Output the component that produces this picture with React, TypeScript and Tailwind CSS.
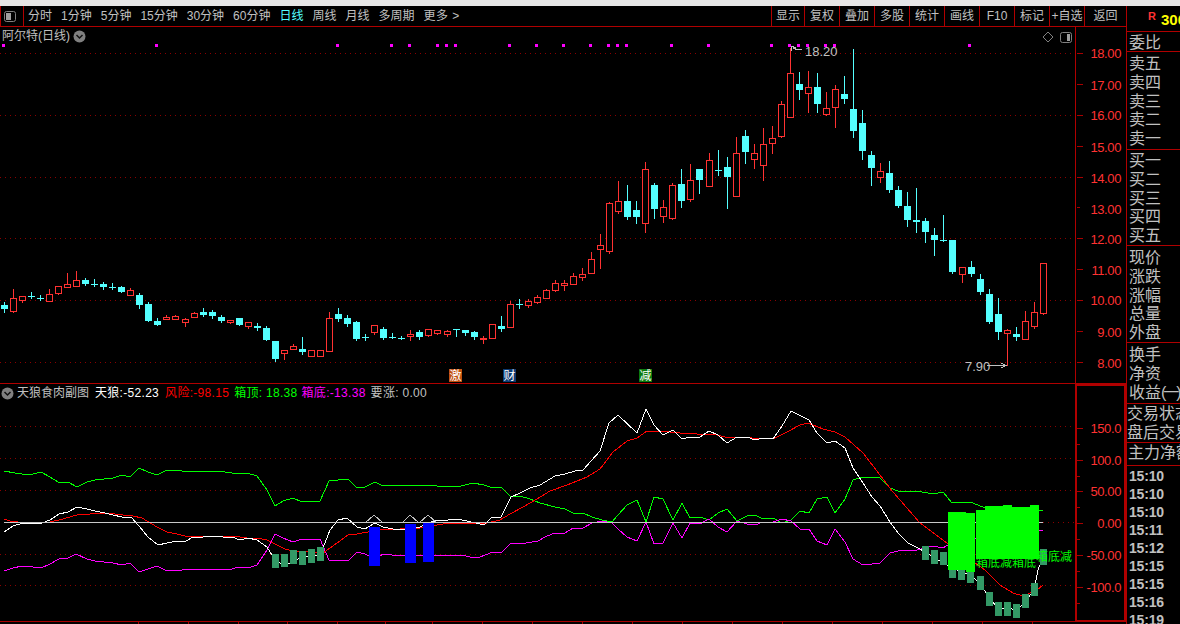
const RED = '#ff3232';
const CYAN = '#54ffff';
const GRID = '#8a0000';

const periods = ['分时', '1分钟', '5分钟', '15分钟', '30分钟', '60分钟', '日线', '周线', '月线', '多周期'];
const actions = [
	{ name: '显示', w: 'w-[33px]' },
	{ name: '复权', w: 'w-[35px]' },
	{ name: '叠加', w: 'w-[35px]' },
	{ name: '多股', w: 'w-[35px]' },
	{ name: '统计', w: 'w-[35px]' },
	{ name: '画线', w: 'w-[35px]' },
	{ name: 'F10', w: 'w-[35px]' },
	{ name: '标记', w: 'w-[35px]' },
	{ name: '+自选', w: 'w-[35px]' },
	{ name: '返回', w: 'w-[42px]' },
];

// [red?, high, body top, body bottom, low], one per trading day
const candles: number[][] = [
	[0, 302, 305, 309, 312], [1, 289, 298, 311, 312], [1, 296, 296, 300, 302], [0, 292, 296, 297, 298],
	[0, 295, 298, 299, 300], [1, 289, 294, 301, 301], [1, 286, 286, 293, 294], [1, 273, 284, 287, 287],
	[1, 271, 280, 286, 286], [0, 278, 280, 284, 285], [0, 279, 284, 285, 286], [0, 282, 284, 287, 289],
	[0, 283, 287, 288, 289], [0, 286, 287, 292, 292], [1, 288, 290, 295, 295], [0, 293, 295, 305, 308],
	[0, 302, 304, 321, 321], [0, 318, 321, 325, 325], [1, 315, 317, 319, 319], [1, 315, 316, 319, 319],
	[1, 318, 319, 322, 326], [1, 312, 313, 317, 317], [0, 308, 312, 315, 316], [0, 310, 312, 316, 318],
	[0, 315, 317, 321, 322], [1, 320, 320, 322, 323], [0, 318, 318, 325, 325], [1, 322, 322, 326, 328],
	[0, 323, 326, 328, 330], [0, 326, 328, 340, 340], [0, 341, 341, 359, 361], [1, 350, 350, 353, 359],
	[1, 344, 346, 349, 349], [0, 337, 349, 352, 354], [1, 350, 350, 356, 356], [1, 350, 350, 356, 356],
	[1, 312, 318, 351, 351], [0, 308, 314, 319, 321], [0, 315, 318, 324, 326], [0, 321, 322, 339, 340],
	[0, 334, 337, 338, 340], [1, 325, 325, 332, 334], [0, 327, 329, 338, 339], [0, 333, 337, 338, 338],
	[0, 336, 338, 339, 339], [1, 330, 334, 336, 340], [0, 330, 332, 337, 339], [1, 329, 329, 335, 336],
	[1, 330, 330, 333, 334], [1, 330, 331, 334, 336], [0, 329, 329, 330, 336], [0, 330, 330, 333, 335],
	[0, 331, 332, 337, 339], [1, 336, 338, 339, 343], [1, 324, 324, 338, 338], [0, 316, 326, 329, 331],
	[1, 301, 304, 327, 327], [0, 299, 304, 305, 308], [1, 299, 301, 305, 307], [1, 295, 297, 302, 303],
	[1, 289, 290, 298, 298], [1, 280, 283, 290, 291], [1, 280, 283, 285, 290], [1, 273, 276, 284, 284],
	[1, 268, 274, 277, 280], [1, 252, 259, 273, 273], [1, 234, 245, 249, 268], [1, 202, 203, 251, 253],
	[1, 181, 201, 211, 213], [0, 185, 201, 217, 219], [0, 201, 210, 217, 223], [1, 162, 169, 223, 232],
	[0, 183, 185, 209, 218], [1, 200, 207, 216, 222], [1, 183, 185, 218, 219], [0, 169, 184, 201, 207],
	[1, 164, 180, 199, 201], [0, 169, 169, 180, 193], [1, 153, 160, 186, 186], [0, 150, 170, 171, 175],
	[0, 157, 167, 177, 208], [1, 137, 153, 196, 196], [0, 130, 136, 152, 163], [1, 144, 153, 159, 168],
	[1, 128, 144, 165, 180], [1, 126, 138, 143, 153], [1, 101, 104, 136, 137], [1, 48, 73, 117, 117],
	[0, 72, 84, 90, 99], [1, 71, 87, 93, 112], [0, 73, 87, 104, 112], [1, 92, 108, 114, 115],
	[1, 85, 89, 107, 127], [0, 76, 94, 99, 103], [0, 49, 109, 131, 137], [0, 110, 123, 151, 159],
	[0, 151, 155, 168, 185], [1, 163, 171, 177, 182], [0, 161, 173, 190, 192], [0, 186, 190, 206, 207],
	[0, 192, 206, 220, 226], [0, 188, 220, 222, 232], [0, 218, 221, 232, 242], [0, 228, 235, 240, 255],
	[0, 215, 240, 241, 241], [0, 240, 240, 272, 273], [1, 267, 267, 274, 282], [0, 261, 267, 274, 276],
	[0, 274, 279, 292, 294], [0, 289, 294, 322, 323], [0, 298, 314, 332, 339], [1, 329, 330, 333, 365],
	[0, 327, 334, 337, 340], [1, 311, 321, 339, 339], [1, 302, 312, 326, 328], [1, 263, 263, 313, 314],
];

const signalDots = [3, 156, 337, 391, 409, 437, 446, 455, 509, 536, 563, 590, 608, 617, 626, 671, 708, 771, 789, 798, 807, 825, 834, 969];

const whiteLine = '4,532 13,526 23,523 33,523 42,523 50,520 59,514 68,512 77,507 87,509 95,511 105,513 113,515 122,517 131,517 139,526 148,537 158,545 167,543 177,541 186,541 193,537 203,537 213,536 223,537 232,537 240,540 248,538 257,540 267,547 275,560 283,565 293,562 302,557 320,555 325,543 330,530 338,520 347,518 357,527 365,529 375,523 383,527 393,529 402,530 410,527 420,527 428,523 438,520 448,520 457,519 467,521 480,524 484,525 492,517 501,517 511,497 520,493 530,488 540,485 555,476 565,474 575,471 583,470 600,451 609,423 618,415 637,433 646,409 654,425 663,435 673,430 682,439 690,437 700,437 709,431 718,435 727,443 737,437 747,437 755,440 763,438 773,439 782,426 791,411 809,420 817,433 827,443 835,441 845,448 853,468 863,483 872,497 880,506 890,522 898,533 908,543 920,549 933,557 947,565 957,570 970,575 980,583 989,598 998,608 1007,608 1017,610 1025,602 1034,590 1038,570 1043,557';
const redLine = '4,519 10,521 18,522 50,522 63,519 77,515 90,514 107,513 123,515 133,516 142,518 157,527 167,532 177,534 185,536 207,536 233,536 247,538 257,538 267,540 277,545 285,549 293,551 323,553 337,543 348,535 357,534 368,532 380,530 400,529 420,528 437,525 450,523 462,523 487,523 500,520 510,514 523,507 537,499 550,491 567,485 587,477 600,469 613,452 627,441 637,438 647,431 660,431 680,433 697,434 713,434 725,437 747,437 752,438 773,439 787,432 800,425 808,423 823,429 835,432 845,437 863,453 880,475 893,492 907,508 920,523 947,543 985,570 1000,585 1013,593 1023,596 1037,590 1043,585';
const greenLine = '4,471 15,473 22,474 33,474 41,472 50,477 58,482 68,482 77,487 87,482 95,480 113,478 122,475 130,477 139,468 148,472 157,475 167,470 182,471 192,472 200,471 217,471 232,473 238,474 247,473 257,476 267,490 275,506 283,501 293,498 302,502 320,501 329,481 348,479 357,488 365,487 375,482 383,486 392,485 400,486 407,485 433,485 437,486 452,486 457,487 473,483 484,485 493,488 501,487 511,497 520,496 530,499 540,503 555,507 565,509 573,513 583,513 592,517 602,520 612,522 618,515 627,505 637,500 646,522 654,497 663,499 673,520 682,503 690,518 700,517 709,520 718,513 727,509 737,521 747,516 755,515 763,519 773,518 782,523 791,520 800,511 809,513 817,499 827,497 835,513 845,499 853,480 863,477 872,477 880,478 890,488 898,491 908,492 917,491 933,494 943,492 952,503 970,502 983,507 1039,510 1043,510';
const magentaLine = '4,571 13,568 22,566 33,567 41,568 50,564 59,559 68,558 76,554 87,559 95,561 113,563 122,565 130,563 139,572 148,569 157,566 167,571 182,570 207,569 212,570 220,569 232,569 238,567 248,568 257,565 267,550 275,534 283,538 293,542 302,539 320,539 329,560 348,561 357,552 365,554 375,559 383,554 392,555 462,555 470,557 480,557 493,552 501,553 511,543 520,544 538,541 547,536 555,533 565,533 573,528 583,528 592,523 602,521 612,523 618,529 627,537 637,541 646,522 654,544 663,543 673,523 682,538 690,523 700,524 709,519 718,527 727,532 737,521 747,524 755,525 763,522 773,522 782,519 791,521 800,529 809,529 817,541 827,545 835,529 845,542 853,559 863,565 872,564 880,563 890,553 898,551 908,550 917,550 933,546 943,548 953,542 1039,530 1043,531';
const grayPeaks = ['365,523 374,515 383,523', '402,523 410,515 419,523 428,515 437,523'];

// [left, top, bottom]
const tealBars = [
	[272, 554, 568], [281, 554, 567], [290, 550, 564], [299, 551, 565], [308, 549, 563], [317, 547, 561],
	[922, 546, 560], [931, 550, 564], [940, 552, 565], [949, 556, 578], [958, 558, 580], [967, 560, 583],
	[977, 576, 590], [986, 592, 606], [995, 602, 616], [1004, 602, 616], [1013, 604, 618], [1022, 594, 608],
	[1031, 583, 596], [1040, 549, 565],
];
const blueBars = [
	[369, 527, 566], [405, 524, 563], [423, 523, 562],
];
// [left, width, top, bottom]
const limeBlocks = [
	[948, 18, 512, 570], [966, 9, 513, 572], [976, 9, 510, 559], [985, 18, 506, 559],
	[1003, 9, 505, 559], [1012, 18, 507, 559], [1030, 9, 505, 559],
];
// label of the box, printed low on the green blocks
const boxLabels = [
	{ x: 976, y: 567, text: '箱底减' },
	{ x: 1012, y: 567, text: '箱底' },
	{ x: 1036, y: 561, text: '箱底减' },
];

const mainAxis = [
	{ label: '18.00', y: 53 }, { label: '17.00', y: 85 }, { label: '16.00', y: 115 }, { label: '15.00', y: 147 },
	{ label: '14.00', y: 178 }, { label: '13.00', y: 209 }, { label: '12.00', y: 239 }, { label: '11.00', y: 270 },
	{ label: '10.00', y: 300 }, { label: '9.00', y: 332 }, { label: '8.00', y: 363 },
];
const subAxis = [
	{ label: '150.0', y: 427 }, { label: '100.0', y: 459 }, { label: '50.00', y: 490 },
	{ label: '0.00', y: 522 }, { label: '-50.00', y: 554 }, { label: '-100.0', y: 586 },
];

const panelGroups = [
	{ rows: ['卖五', '卖四', '卖三', '卖二', '卖一'], h: 'h-[98px] pt-[3px]' },
	{ rows: ['买一', '买二', '买三', '买四', '买五'], h: 'h-[96px] pt-[2px]' },
	{ rows: ['现价', '涨跌', '涨幅', '总量', '外盘'], h: 'h-[97px] pt-[3px]' },
];
const times = ['15:10', '15:10', '15:10', '15:11', '15:12', '15:15', '15:15', '15:16', '15:19'];

const wickX = (n: number) => Math.floor(4.3 + 9.035 * n);

const Chevron = () => (
	<svg
		width="13"
		height="13"
		viewBox="0 0 13 13">
		<circle
			cx="6.5"
			cy="6.5"
			r="6"
			fill="#808080"
		/>
		<path
			d="M3.5 5 L6.5 8 L9.5 5"
			fill="none"
			stroke="#111"
			strokeWidth="1.5"
		/>
	</svg>
);

const PanelIcon = ({ right }: { right?: boolean }) => (
	<svg
		width="12"
		height="11"
		viewBox="0 0 12 11">
		<rect
			x="0.5"
			y="0.5"
			width="11"
			height="10"
			rx="2"
			fill="none"
			stroke="#808080"
		/>
		<rect
			x={right ? 7 : 2}
			y="2"
			width={right ? 3 : 5}
			height="7"
			fill="#a0a0a0"
		/>
	</svg>
);

const Axis = ({ items, ticks, top, height }: { items: { label: string; y: number }[]; ticks: number[]; top: number; height: number }) => (
	<svg
		className="block"
		width="49"
		height={height}
		viewBox={`1077 ${top} 49 ${height}`}
		shapeRendering="crispEdges">
		{ticks.map((y) => (
			<line
				key={y}
				x1="1077"
				x2={items.some((i) => Math.abs(i.y - y) < 2) ? 1083 : 1080}
				y1={y + 0.5}
				y2={y + 0.5}
				stroke="#a80000"
			/>
		))}
		{items.map((i) => (
			<text
				key={i.label}
				x="1121"
				y={i.y + 5}
				textAnchor="end"
				fontSize="13"
				fill={RED}
				letterSpacing="-0.4">
				{i.label}
			</text>
		))}
	</svg>
);

const GridLine = ({ y, x1 = 0, x2 = 1075 }: { y: number; x1?: number; x2?: number }) => (
	<line
		x1={x1}
		x2={x2}
		y1={y + 0.5}
		y2={y + 0.5}
		stroke={GRID}
		strokeDasharray="1 4"
	/>
);

const Chip = ({ x, bg, text }: { x: number; bg: string; text: string }) => (
	<g>
		<rect
			x={x}
			y="369"
			width="13"
			height="13"
			fill={bg}
		/>
		<text
			x={x + 0.5}
			y="380"
			fontSize="12"
			fill="#fff">
			{text}
		</text>
	</g>
);

const MainChart = () => (
	<svg
		className="block"
		width="1075"
		height="356"
		viewBox="0 27 1075 356">
		<g shapeRendering="crispEdges">
			{[53, 115, 177, 238, 300, 362].map((y) => (
				<GridLine
					key={y}
					y={y}
				/>
			))}
			{signalDots.map((x) => (
				<rect
					key={x}
					x={x - 1}
					y="44"
					width="3"
					height="3"
					fill="#ff00ff"
				/>
			))}
			{candles.map(([up, high, top, bottom, low], n) => {
				const x = wickX(n);
				const color = up ? RED : CYAN;
				return (
					<g key={n}>
						<rect
							x={x}
							y={high}
							width="1"
							height={low - high + 1}
							fill={color}
						/>
						{up ? (
							<rect
								x={x - 3 + 0.5}
								y={top + 0.5}
								width="6"
								height={Math.max(bottom - top, 1)}
								fill="#000"
								stroke={color}
							/>
						) : (
							<rect
								x={x - 3}
								y={top}
								width="7"
								height={Math.max(bottom - top, 1)}
								fill={color}
							/>
						)}
					</g>
				);
			})}
			<path
				d="M791 46 L791 51 M791 46 L796 48 M793 48 L798 50 L802 49 M987 365.5 L1005 365.5 M1001 363 L1006 365.5 L1001 368"
				fill="none"
				stroke="#c0c0c0"
			/>
		</g>
		<text
			x="805"
			y="56"
			fontSize="13"
			fill="#c0c0c0">
			18.20
		</text>
		<text
			x="965"
			y="371"
			fontSize="13"
			fill="#c0c0c0">
			7.90
		</text>
		<Chip
			x={449}
			bg="#c0500f"
			text="激"
		/>
		<Chip
			x={503}
			bg="#0c3a72"
			text="财"
		/>
		<Chip
			x={639}
			bg="#0c7a0c"
			text="减"
		/>
		<path
			d="M1048 32 L1053 37 L1048 42 L1043 37 Z"
			fill="none"
			stroke="#808080"
		/>
	</svg>
);

const SubChart = () => (
	<svg
		className="block"
		width="1075"
		height="240"
		viewBox="0 384 1075 240">
		<g
			fill="none"
			shapeRendering="crispEdges">
			{[426, 458, 490, 554, 585].map((y) => (
				<GridLine
					key={y}
					y={y}
				/>
			))}
			<GridLine
				y={522}
				x1={1043}
			/>
			<line
				x1="0"
				x2="1075"
				y1="621.5"
				y2="621.5"
				stroke="#a80000"
			/>
			{[138, 188, 238, 287, 337, 385, 432, 482, 532, 582, 632, 682, 732, 782, 832, 882, 932, 982, 1032].map((x) => (
				<line
					key={x}
					x1={x + 0.5}
					x2={x + 0.5}
					y1="622"
					y2="624"
					stroke="#a80000"
				/>
			))}
			<polyline
				points={greenLine}
				stroke="#00ff00"
			/>
			<polyline
				points={magentaLine}
				stroke="#ff00ff"
			/>
			<polyline
				points={redLine}
				stroke="#ff0000"
			/>
			<polyline
				points={whiteLine}
				stroke="#ffffff"
			/>
			{grayPeaks.map((p) => (
				<polyline
					key={p}
					points={p}
					stroke="#c0c0c0"
				/>
			))}
			<line
				x1="4"
				x2="1043"
				y1="522.5"
				y2="522.5"
				stroke="#c8c8c8"
			/>
			{tealBars.map(([x, top, bottom]) => (
				<rect
					key={x}
					x={x}
					y={top}
					width="7"
					height={bottom - top}
					fill="#339966"
				/>
			))}
			{blueBars.map(([x, top, bottom]) => (
				<rect
					key={x}
					x={x}
					y={top}
					width="11"
					height={bottom - top}
					fill="#0000ff"
				/>
			))}
			{limeBlocks.map(([x, w, top, bottom]) => (
				<rect
					key={x}
					x={x}
					y={top}
					width={w}
					height={bottom - top}
					fill="#00ff00"
				/>
			))}
		</g>
		{boxLabels.map((l) => (
			<text
				key={l.x}
				x={l.x}
				y={l.y}
				fontSize="12"
				fill="#00ff00">
				{l.text}
			</text>
		))}
	</svg>
);

export default function App() {
	return (
		<div className="w-[1180px] h-[624px] overflow-hidden bg-black text-[#c0c0c0] text-[12px] font-['Liberation_Sans','Noto_Sans_CJK_SC',sans-serif]">
			<div className="h-[6px] bg-[#e6e6e6]" />
			<div className="flex h-[618px]">
				<div className="w-[1126px] flex flex-col">
					{/* toolbar */}
					<div className="h-[21px] flex items-stretch border-b border-[#b00000] border-l whitespace-nowrap">
						<div className="w-[23px] flex items-center justify-center border-r border-[#b00000] pr-1">
							<PanelIcon />
						</div>
						<div className="flex items-center gap-[9px] pl-[4px]">
							{periods.map((p) => (
								<span
									key={p}
									className={p === '日线' ? 'text-[#54ffff]' : ''}>
									{p}
								</span>
							))}
							<span className="tracking-[0.5px]">更多 &gt;</span>
						</div>
						<div className="ml-auto flex">
							{actions.map((a) => (
								<div
									key={a.name}
									className={`${a.w} flex items-center justify-center border-l border-[#b00000]`}>
									{a.name}
								</div>
							))}
						</div>
					</div>
					{/* price chart */}
					<div className="relative h-[357px] flex border-b border-[#b00000]">
						<MainChart />
						<div className="w-[51px] border-l border-[#b00000] pl-px">
							<Axis
								items={mainAxis}
								ticks={[53, 84, 115, 146, 177, 207, 238, 269, 300, 331, 362]}
								top={27}
								height={356}
							/>
						</div>
						<div className="absolute left-[2px] top-[2px] flex items-center gap-[3px] h-[14px]">
							<span>阿尔特(日线)</span>
							<Chevron />
						</div>
						<div className="absolute left-[1060px] top-[5px]">
							<PanelIcon right />
						</div>
					</div>
					{/* indicator chart */}
					<div className="relative h-[240px] flex -mb-px">
						<SubChart />
						<div className="w-[51px] h-[238px] border-2 border-[#b00000] overflow-hidden">
							<Axis
								items={subAxis}
								ticks={[427, 443, 459, 475, 490, 506, 522, 538, 554, 570, 586, 602]}
								top={385}
								height={234}
							/>
						</div>
						<div className="absolute left-[1px] top-[2px] flex items-center h-[14px] whitespace-nowrap">
							<Chevron />
							<span className="ml-[3px]">天狼食肉副图</span>
							<span className="ml-[6px] text-white tracking-[0.3px]">天狼:-52.23</span>
							<span className="ml-[6px] text-[#ff0000] tracking-[0.3px]">风险:-98.15</span>
							<span className="ml-[5px] text-[#00ff00] tracking-[0.3px]">箱顶: 18.38</span>
							<span className="ml-[4px] text-[#ff00ff] tracking-[0.3px]">箱底:-13.38</span>
							<span className="ml-[5px] tracking-[0.3px]">要涨: 0.00</span>
						</div>
					</div>
				</div>
				{/* right panel */}
				<div className="w-[54px] border-l border-[#b00000] overflow-hidden whitespace-nowrap text-[16px] leading-[18.75px]">
					<div className="h-[26px] border-b border-[#b00000] flex pl-[21px]">
						<span className="text-[11px] font-bold text-[#ff3232] leading-[20px]">R</span>
						<span className="ml-[5px] text-[15px] font-bold text-[#ffff00] leading-[27px]">300</span>
					</div>
					<div className="h-[20px] border-b border-[#b00000] pl-[2px] pt-[2px]">委比</div>
					{panelGroups.map((g) => (
						<div
							key={g.rows[0]}
							className={`${g.h} border-b border-[#b00000] pl-[2px]`}>
							{g.rows.map((r) => (
								<div key={r}>{r}</div>
							))}
						</div>
					))}
					<div className="h-[61px] pt-[3px] border-b border-[#b00000] pl-[2px]">
						<div>换手</div>
						<div>净资</div>
						<div>
							收益<span className="tracking-[-3px]">(一)</span>
						</div>
					</div>
					<div className="h-[39px] pt-[1px] border-b border-[#b00000]">
						<div>交易状态</div>
						<div>盘后交易</div>
					</div>
					<div className="h-[23px] pt-[1px] border-b border-[#b00000] pl-[1px]">主力净额</div>
					<div className="pl-[2px] font-bold text-[14px] tracking-[-0.2px] leading-[18px] pt-px">
						{times.map((t, i) => (
							<div key={i}>{t}</div>
						))}
					</div>
				</div>
			</div>
		</div>
	);
}
